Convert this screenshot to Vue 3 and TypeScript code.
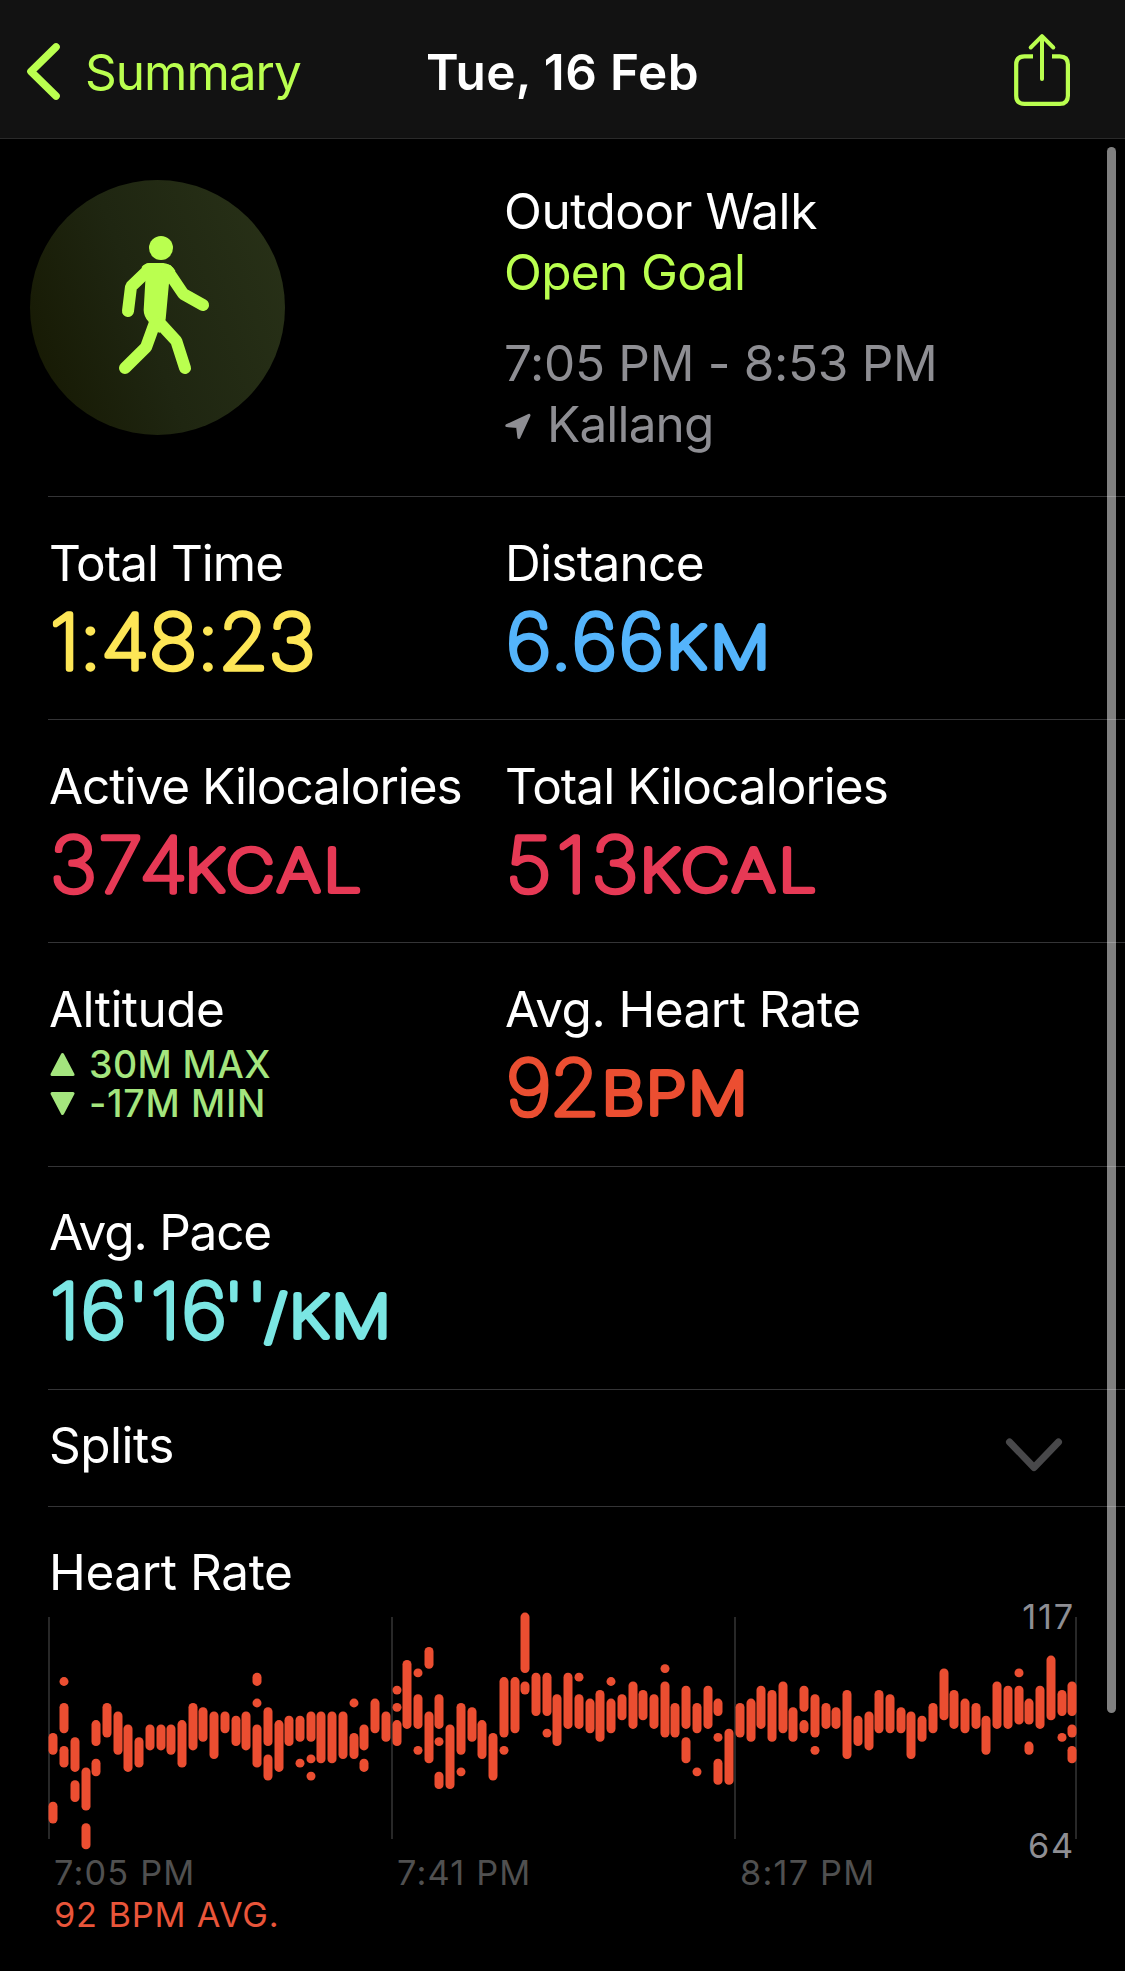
<script setup lang="ts">
interface Metric {
  label: string
  track: number
  value?: string
  valueTrack?: number
  mark?: string
  unit?: string
  unitX?: number
  unitTrack?: number
  color?: string
  altitude?: boolean
}

const rows: Metric[][] = [
  [
    { label: 'Total Time', track: -1, value: '1:48:23', valueTrack: -0.1, color: '#fde656' },
    { label: 'Distance', track: -0.7, value: '6.66', valueTrack: 1.5, unit: 'KM', unitX: 160.5, unitTrack: 3.8, color: '#54b4fb' },
  ],
  [
    { label: 'Active Kilocalories', track: -1.05, value: '374', valueTrack: 1.5, unit: 'KCAL', unitX: 135, unitTrack: 3.5, color: '#e63955' },
    { label: 'Total Kilocalories', track: -0.96, value: '513', valueTrack: 5, unit: 'KCAL', unitX: 134, unitTrack: 3.5, color: '#e63955' },
  ],
  [
    { label: 'Altitude', track: -0.55, altitude: true },
    { label: 'Avg. Heart Rate', track: -0.54, value: '92', valueTrack: -1.5, unit: 'BPM', unitX: 95.7, unitTrack: 1.8, color: '#eb4e31' },
  ],
  [{ label: 'Avg. Pace', track: -1.2, value: `16'16`, valueTrack: 1.1, mark: `''`, unit: '/KM', unitX: 215, unitTrack: 2.4, color: '#7ae6e3' }],
]

// Heart rate ranges per slot, as beats below the 117 BPM maximum: [from, to]
const samples: number[][][] = [
  [[28, 31], [44, 47]], [[15, 15], [21, 26], [31, 34]], [[29, 35], [39, 42]], [[36, 44], [49, 53]],
  [[25, 29], [34, 36]], [[21, 27]], [[23, 31]], [[26, 35]], [[29, 34]], [[26, 30]], [[26, 30]], [[26, 31]],
  [[25, 34]], [[21, 30]], [[22, 28]], [[23, 32]], [[23, 26]], [[24, 29]], [[23, 30]],
  [[14, 15], [20, 20], [26, 34]], [[22, 29], [33, 37]], [[25, 35]], [[24, 29]], [[24, 28], [34, 34]],
  [[23, 28], [33, 33], [37, 37]], [[23, 33]], [[23, 33]], [[23, 32]], [[20, 20], [28, 32]],
  [[26, 30], [34, 35]], [[20, 26]], [[23, 28]], [[17, 17], [21, 21], [25, 29]], [[11, 25]],
  [[13, 13], [19, 25], [31, 31]], [[8, 11], [23, 33]], [[19, 25], [29, 29], [37, 39]], [[26, 39]],
  [[21, 31], [36, 36]], [[22, 28]], [[25, 32]], [[28, 37]], [[15, 27], [31, 31]], [[15, 26]],
  [[0, 12], [16, 17]], [[14, 22]], [[14, 22], [27, 27]], [[19, 29]], [[14, 25]], [[14, 14], [19, 25]],
  [[20, 26]], [[18, 28]], [[15, 15], [20, 26]], [[19, 23]], [[16, 25]], [[18, 23]], [[19, 25]],
  [[12, 12], [16, 27]], [[21, 27]], [[17, 25], [29, 33]], [[21, 26], [36, 36]], [[17, 25]],
  [[20, 22], [28, 28], [34, 38]], [[27, 38]], [[21, 27]], [[20, 28]], [[17, 25]], [[18, 28]], [[16, 26]],
  [[22, 28]], [[17, 21], [25, 26]], [[19, 27], [31, 31]], [[21, 25]], [[22, 25]], [[18, 32]], [[24, 29]],
  [[23, 30]], [[18, 26]], [[19, 26]], [[22, 26]], [[23, 32]], [[24, 28]], [[21, 26]], [[13, 23]], [[18, 25]],
  [[20, 26]], [[21, 25]], [[24, 31]], [[16, 25]], [[17, 25]], [[13, 13], [17, 24]], [[20, 24], [30, 31]],
  [[17, 25]], [[10, 23]], [[18, 22], [28, 28]], [[16, 22], [26, 27], [31, 33]],
]

const bars = samples.flatMap((slot, i) =>
  slot.map(([from, to]) => ({
    x: Math.ceil(52.83 + i * 10.726) - 4.5,
    y: 14 + from * 4.3 - 4.4,
    h: (to - from) * 4.3 + 8.8,
  })),
)

const ticks = [
  { x: 48, w: 2, label: '7:05 PM' },
  { x: 391, w: 2, label: '7:41 PM' },
  { x: 734, w: 2, label: '8:17 PM' },
  { x: 1075, w: 2, label: '' },
]
</script>

<template>
  <div class="screen">
    <header class="nav">
      <div class="back">
        <svg width="85" height="138" viewBox="0 0 85 138">
          <path d="M56 47 L31 71.5 L56 96" fill="none" stroke="#baff4f" stroke-width="7.6" stroke-linecap="round" stroke-linejoin="round" />
        </svg>
        <span>Summary</span>
      </div>
      <h1>Tue, 16 Feb</h1>
      <svg class="share" width="125" height="138" viewBox="1000 0 125 138" fill="none" stroke="#baff4f" stroke-width="4.2">
        <path d="M1033 56.3 H1024.5 Q1016.2 56.3 1016.2 64.5 V95.7 Q1016.2 103.9 1024.5 103.9 H1059.7 Q1067.9 103.9 1067.9 95.7 V64.5 Q1067.9 56.3 1059.7 56.3 H1052" />
        <path d="M1042 79 V37 M1030.7 47.5 L1042 36.2 L1053.3 47.5" stroke-width="4" stroke-linecap="round" stroke-linejoin="round" />
      </svg>
    </header>

    <main>
      <section class="hero">
        <div class="badge">
          <svg width="255" height="255" viewBox="90 60 765 765">
            <g fill="#baff4f">
              <circle cx="483" cy="264" r="36" />
              <path d="M447 309 H490 Q512 311 526 332 L507 370 L497 478 L478 520 L447 487 Q431 470 431 450 L436 363 L425 321 Q434 310 447 309 Z" />
            </g>
            <g fill="none" stroke="#baff4f" stroke-width="36" stroke-linecap="round" stroke-linejoin="bevel">
              <path d="M447 328 L393 380 L384 453" />
              <path d="M502 331 L550 402 L609 435" />
              <path d="M466 485 L438 562 L375 624" />
              <path d="M481 491 L529 543 L555 624" />
            </g>
          </svg>
        </div>
        <div class="info">
          <div class="kind">Outdoor Walk</div>
          <div class="goal">Open Goal</div>
          <div class="time">7:05 PM - 8:53 PM</div>
          <div class="place">
            <svg width="27" height="27" viewBox="0 0 27 27">
              <path d="M2.8 12.6 L25 2.3 L14.9 24.5 L13.6 13.6 Z" fill="#8e8e93" stroke="#8e8e93" stroke-width="3" stroke-linejoin="round" />
            </svg>
            <span>Kallang</span>
          </div>
        </div>
      </section>

      <section v-for="(row, r) in rows" :key="r" class="row" :class="{ tall: r === 2, last: r === 3 }">
        <div v-for="m in row" :key="m.label" class="cell">
          <div class="label" :style="{ letterSpacing: m.track + 'px' }">{{ m.label }}</div>
          <div v-if="m.altitude" class="altitude">
            <div>
              <svg width="25" height="25" viewBox="0 0 25 25"><path d="M12.5 2.5 L23 22.5 H2 Z" /></svg>
              <span class="max">30M MAX</span>
            </div>
            <div>
              <svg width="25" height="25" viewBox="0 0 25 25"><path d="M12.5 22.5 L23 2.5 H2 Z" /></svg>
              <span class="min">-17M MIN</span>
            </div>
          </div>
          <svg v-else class="value" width="440" height="100" :style="{ fill: m.color, stroke: m.color }">
            <text class="num" transform="translate(0 74.5) scale(1.06 1)" :style="{ letterSpacing: m.valueTrack + 'px' }">{{ m.value }}<tspan v-if="m.mark" dx="-5">{{ m.mark }}</tspan></text>
            <text v-if="m.unit" class="unit" :transform="`translate(${m.unitX} 74) scale(1.15 1)`" :style="{ letterSpacing: m.unitTrack + 'px' }">{{ m.unit }}</text>
          </svg>
        </div>
      </section>

      <section class="splits">
        <div class="label">Splits</div>
        <svg width="58" height="36" viewBox="0 0 58 36">
          <path d="M4.5 5 L29 30.5 L53.5 5" fill="none" stroke="#48484a" stroke-width="7" stroke-linecap="round" stroke-linejoin="round" />
        </svg>
      </section>

      <section class="heart">
        <div class="label">Heart Rate</div>
        <svg class="chart" width="1125" height="290" viewBox="0 0 1125 290">
          <g v-for="t in ticks" :key="t.x">
            <rect :x="t.x" y="14" :width="t.w" height="222" fill="#282828" />
            <text v-if="t.label" :x="t.x + 6" y="281.7" fill="#505050">{{ t.label }}</text>
          </g>
          <rect v-for="(b, i) in bars" :key="i" :x="b.x" :y="b.y" width="9" :height="b.h" rx="4.4" fill="#eb4e31" />
          <text class="bound" x="1075" y="26" text-anchor="end" fill="#8e8e93">117</text>
          <text class="bound" x="1075" y="254.7" text-anchor="end" fill="#8e8e93">64</text>
        </svg>
        <div class="avg">92 BPM AVG.</div>
      </section>
    </main>
    <div class="scrollbar"></div>
  </div>
</template>

<style>
body {
  margin: 0;
  background: #000;
}
</style>

<style scoped>
.screen {
  position: relative;
  width: 1125px;
  height: 1971px;
  overflow: hidden;
  background: #000;
  color: #fff;
  font-family: Inter, "Liberation Sans", sans-serif;
  font-size: 49.5px;
  line-height: 61px;
  white-space: nowrap;
}
svg {
  display: block;
  flex: none;
}
.nav {
  display: grid;
  grid-template-columns: 1fr auto 1fr;
  align-items: center;
  height: 138px;
  background: #121212;
  border-bottom: 1px solid #2a2a2a;
}
.back {
  display: flex;
  align-items: center;
  color: #baff4f;
  letter-spacing: -1px;
}
.nav span,
.nav h1 {
  padding-top: 7px;
}
.nav h1 {
  margin: 0;
  font-size: 49.5px;
  font-weight: 600;
  letter-spacing: 0.4px;
}
.share {
  justify-self: end;
}
.hero {
  display: flex;
  box-sizing: border-box;
  height: 358px;
  padding: 41px 0 0 30px;
  background: linear-gradient(#343436, #343436) 48px 100% / 100% 1px no-repeat;
}
.badge {
  width: 255px;
  height: 255px;
  border-radius: 50%;
  background: linear-gradient(70deg, #171a04 8%, #1f2611 45%, #293218 100%);
}
.info {
  margin: 1px 0 0 219px;
}
.kind {
  letter-spacing: -0.45px;
}
.goal {
  color: #baff4f;
  letter-spacing: -0.65px;
}
.time {
  margin-top: 30px;
  color: #8e8e93;
  letter-spacing: -0.3px;
}
.place {
  display: flex;
  align-items: center;
  gap: 16px;
  color: #8e8e93;
  letter-spacing: -0.85px;
}
.place svg {
  margin-top: 3px;
}
.row {
  display: grid;
  grid-template-columns: 456px 1fr;
  box-sizing: border-box;
  height: 223px;
  margin-left: 48px;
  padding-top: 36px;
  border-bottom: 1px solid #343436;
}
.row.tall {
  height: 224px;
}
.row.last {
  padding-top: 35px;
}
.cell {
  padding-left: 1px;
}
.value {
  margin-left: 1px;
  overflow: visible;
  stroke-linejoin: round;
  font-weight: 100;
}
.num {
  font-size: 76px;
  stroke-width: 5.3px;
}
.unit {
  font-size: 57.5px;
  stroke-width: 5.9px;
}
.altitude {
  margin: 5px 0 0 1px;
  font-size: 37.5px;
  line-height: 39px;
  font-weight: 450;
  color: #a4e57e;
}
.altitude div {
  display: flex;
  align-items: center;
  gap: 14px;
}
.altitude path {
  fill: #a4e57e;
  stroke: #a4e57e;
  stroke-width: 3px;
  stroke-linejoin: round;
}
.max {
  letter-spacing: 0.4px;
}
.min {
  letter-spacing: 0.7px;
}
.splits {
  display: flex;
  justify-content: space-between;
  box-sizing: border-box;
  height: 117px;
  margin-left: 48px;
  padding: 25px 62px 0 1px;
  border-bottom: 1px solid #343436;
  letter-spacing: -0.5px;
}
.splits svg {
  margin-top: 22px;
}
.heart {
  padding-top: 35px;
}
.heart .label {
  padding-left: 49px;
  letter-spacing: -0.4px;
}
.chart {
  overflow: visible;
  font-size: 34.3px;
  letter-spacing: 1.2px;
}
.bound {
  letter-spacing: 1.8px;
}
.avg {
  padding-left: 54px;
  margin-top: 2px;
  font-size: 34.3px;
  line-height: 40px;
  letter-spacing: 0.85px;
  color: #e9553a;
}
.scrollbar {
  position: absolute;
  top: 147px;
  right: 9px;
  width: 9px;
  height: 1566px;
  border-radius: 5px;
  background: rgba(255, 255, 255, 0.5);
}
</style>
